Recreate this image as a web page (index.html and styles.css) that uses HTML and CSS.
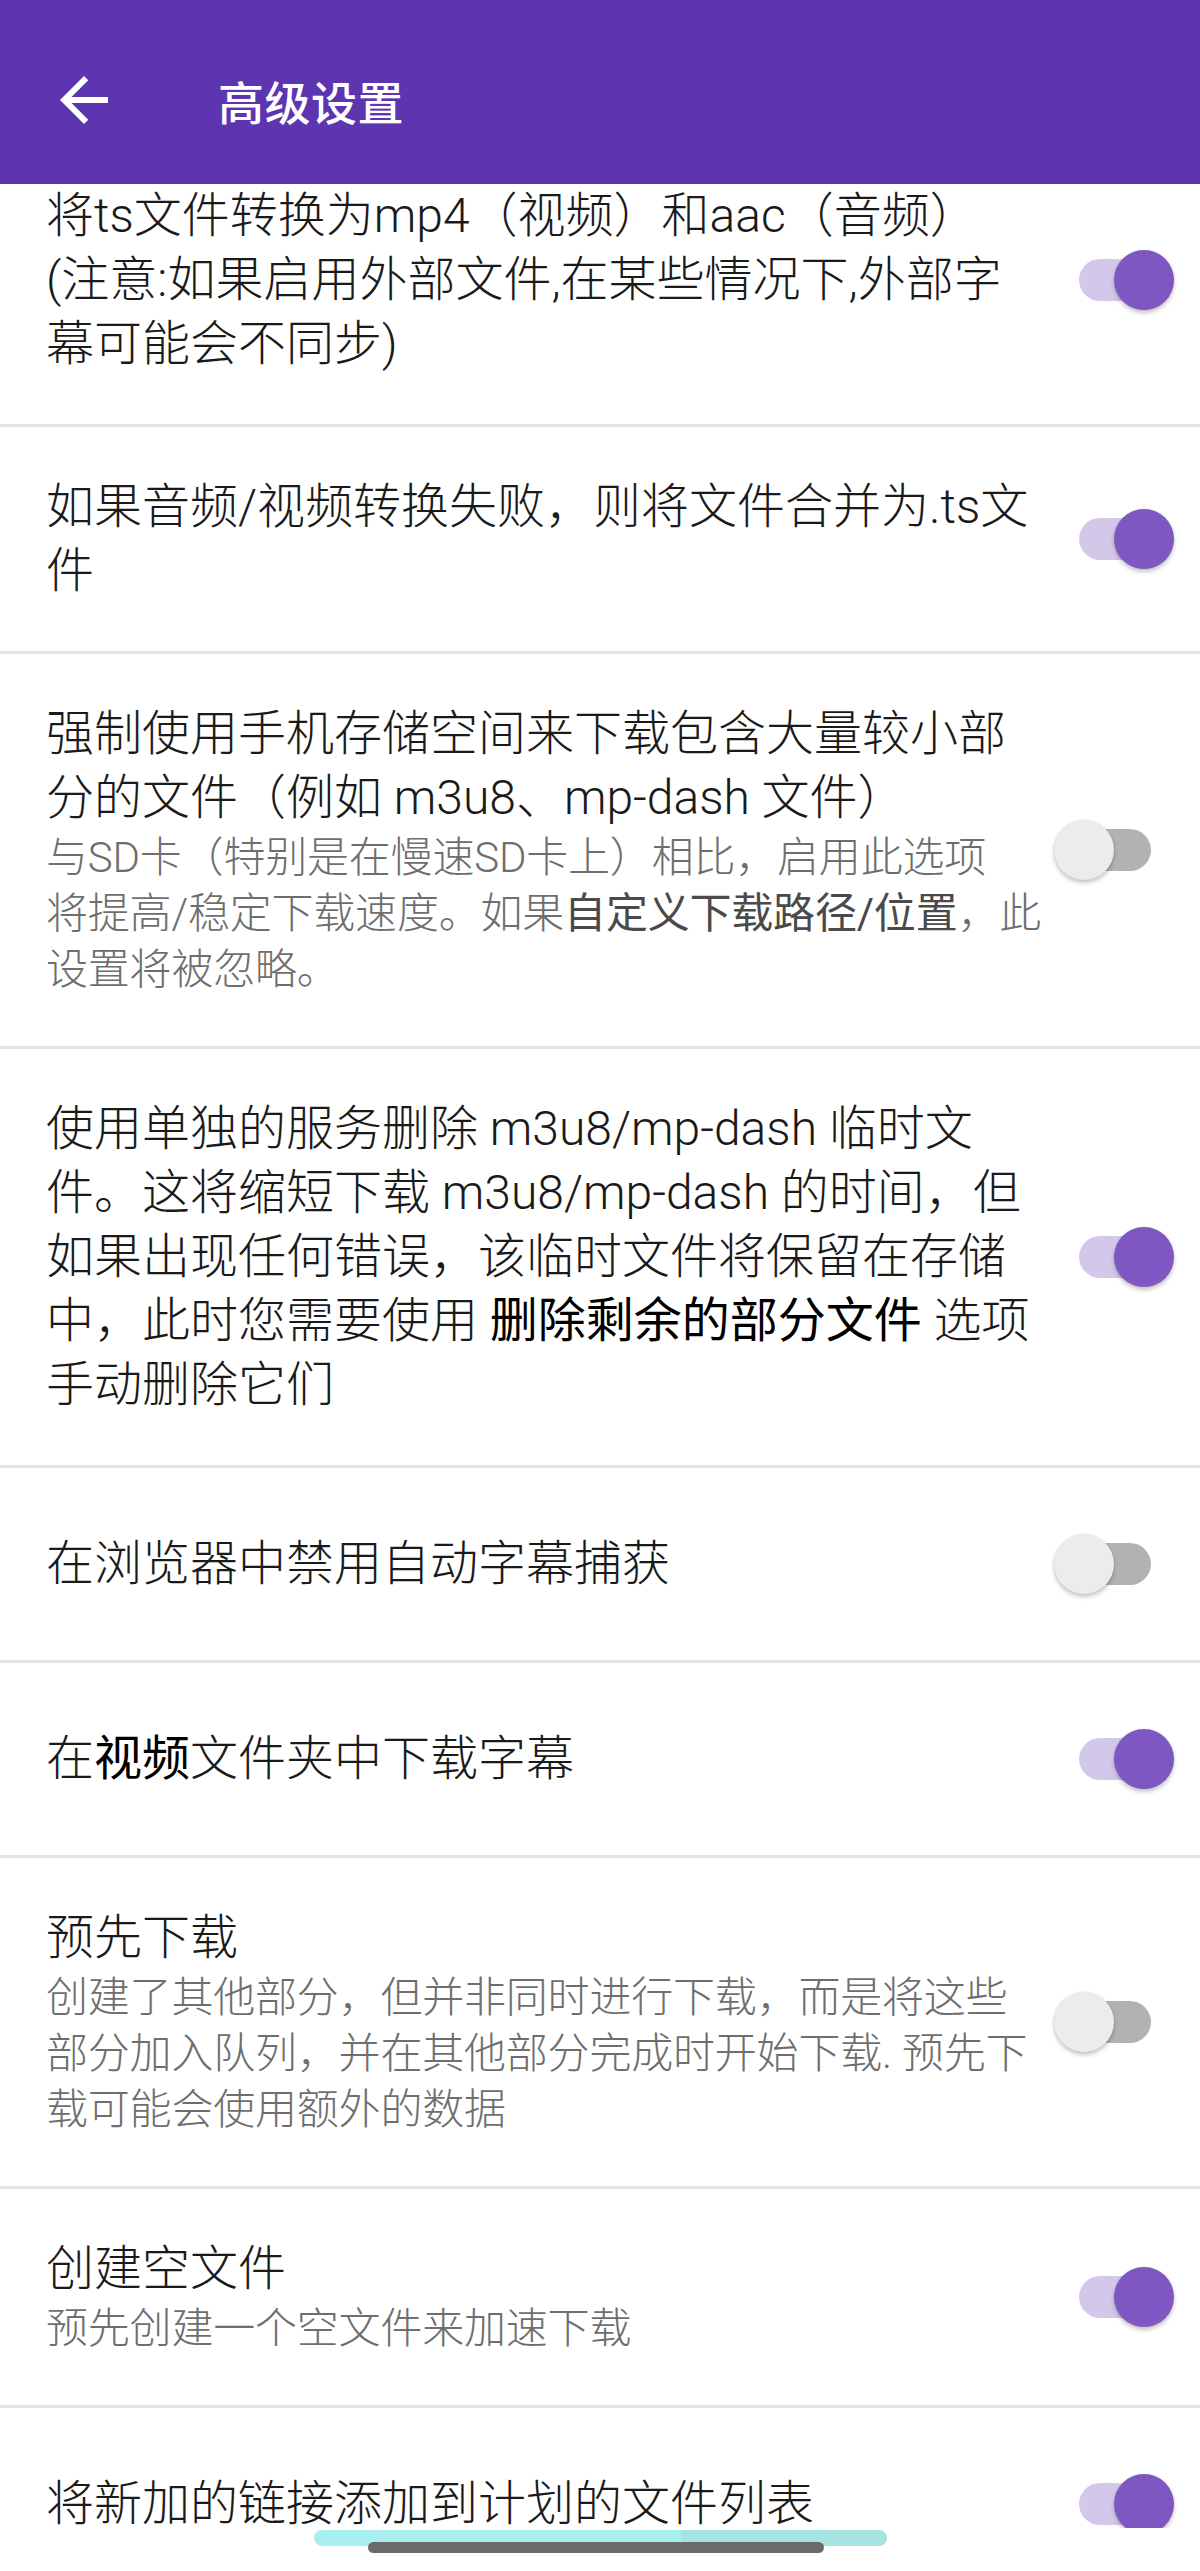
FILE: index.html
```html
<!DOCTYPE html>
<html lang="zh-CN">
    <head>
        <meta charset="UTF-8">
        <meta name="viewport" content="width=device-width,initial-scale=1">
        <title>高级设置</title>
        <link rel="stylesheet" href="styles.css">
    </head>
    <body>
        <div class="screen">
            <header class="appbar">
                <svg class="back" viewBox="0 0 24 24" width="72" height="72">
                    <path d="M20 11H7.83l5.59-5.59L12 4l-8 8 8 8 1.41-1.41L7.83 13H20v-2z" fill="#fff"/>
                </svg>
                <h1 class="appbar-title">高级设置</h1>
            </header>
            <main class="list">
                <div class="pref pref-first">
                    <div class="pref-text">
                        <p class="pref-title">将ts文件转换为mp4（视频）和aac（音频）<br>(注意:如果启用外部文件,在某些情况下,外部字<br>幕可能会不同步)</p>
                    </div>
                    <span class="switch on"><span class="thumb"></span></span>
                </div>
                <div class="pref">
                    <div class="pref-text">
                        <p class="pref-title">如果音频/视频转换失败，则将文件合并为.ts文<br>件</p>
                    </div>
                    <span class="switch on"><span class="thumb"></span></span>
                </div>
                <div class="pref">
                    <div class="pref-text">
                        <p class="pref-title">强制使用手机存储空间来下载包含大量较小部<br>分的文件（例如 m3u8、mp-dash 文件）</p>
                        <p class="pref-summary">与SD卡（特别是在慢速SD卡上）相比，启用此选项<br>将提高/稳定下载速度。如果<span class="em">自定义下载路径/位置</span>，此<br>设置将被忽略。</p>
                    </div>
                    <span class="switch"><span class="thumb"></span></span>
                </div>
                <div class="pref">
                    <div class="pref-text">
                        <p class="pref-title">使用单独的服务删除 m3u8/mp-dash 临时文<br>件。这将缩短下载 m3u8/mp-dash 的时间，但<br>如果出现任何错误，该临时文件将保留在存储<br>中，此时您需要使用 <b>删除剩余的部分文件</b> 选项<br>手动删除它们</p>
                    </div>
                    <span class="switch on"><span class="thumb"></span></span>
                </div>
                <div class="pref">
                    <div class="pref-text">
                        <p class="pref-title">在浏览器中禁用自动字幕捕获</p>
                    </div>
                    <span class="switch"><span class="thumb"></span></span>
                </div>
                <div class="pref">
                    <div class="pref-text">
                        <p class="pref-title">在<span class="em">视频</span>文件夹中下载字幕</p>
                    </div>
                    <span class="switch on"><span class="thumb"></span></span>
                </div>
                <div class="pref">
                    <div class="pref-text">
                        <p class="pref-title">预先下载</p>
                        <p class="pref-summary">创建了其他部分，但并非同时进行下载，而是将这些<br>部分加入队列，并在其他部分完成时开始下载. 预先下<br>载可能会使用额外的数据</p>
                    </div>
                    <span class="switch"><span class="thumb"></span></span>
                </div>
                <div class="pref">
                    <div class="pref-text">
                        <p class="pref-title">创建空文件</p>
                        <p class="pref-summary">预先创建一个空文件来加速下载</p>
                    </div>
                    <span class="switch on"><span class="thumb"></span></span>
                </div>
                <div class="pref">
                    <div class="pref-text">
                        <p class="pref-title">将新加的链接添加到计划的文件列表</p>
                    </div>
                    <span class="switch on"><span class="thumb"></span></span>
                </div>
            </main>
            <div class="navbar">
                <span class="nav-glow"></span>
                <span class="nav-pill"></span>
            </div>
        </div>
    </body>
</html>
```

FILE: styles.css
```css
*, *::before, *::after {
    box-sizing: border-box;
}
html, body {
    margin: 0;
    padding: 0;
    background-color: #fff;
    font-family: Roboto, "Noto Sans CJK SC", sans-serif;
}
.screen {
    display: flex;
    flex-direction: column;
    height: 100vh;
}
.appbar {
    flex: none;
    display: flex;
    align-items: center;
    height: 184px;
    padding: 16px 0 0 48px;
    background-color: #5e35b1;
    position: relative;
    z-index: 1;
}
.back {
    flex: none;
    display: block;
}
.appbar-title {
    margin: 0 0 0 98px;
    font-size: 46px;
    font-weight: 500;
    color: #fff;
    letter-spacing: 0.5px;
}
.list {
    flex: 1;
    overflow: hidden;
}
.pref {
    display: flex;
    align-items: center;
    min-height: 195px;
    padding: 48px 26px 48px 46px;
    border-bottom: 3px solid #e3e3e3;
}
.pref-first {
    padding-top: 0;
}
.pref-text {
    flex: 1;
    min-width: 0;
    white-space: nowrap;
    font-weight: 300;
}
.pref-title, .pref-summary {
    margin: 0;
}
.pref-title {
    font-size: 48px;
    line-height: 64px;
    color: #1a1a1a;
}
.pref-title b, .pref-title .em {
    font-weight: 400;
    color: #000;
}
.pref-summary {
    font-size: 42px;
    line-height: 56px;
    color: #6e6e6e;
    letter-spacing: -0.2px;
}
.pref-summary .em {
    font-weight: 400;
    color: #4a4a4a;
}
.switch {
    flex: none;
    position: relative;
    width: 120px;
    height: 60px;
    margin-left: 8px;
}
.switch::before {
    content: "";
    position: absolute;
    left: 25px;
    top: 9px;
    width: 72px;
    height: 42px;
    border-radius: 21px;
    background-color: #b2b2b2;
}
.thumb {
    position: absolute;
    top: 0;
    left: 0;
    width: 60px;
    height: 60px;
    border-radius: 50%;
    background-color: #ececec;
    box-shadow: 0 3px 4px rgba(0, 0, 0, 0.22), 0 0 2px rgba(0, 0, 0, 0.1);
}
.switch.on::before {
    background-color: #d3c8ea;
}
.switch.on .thumb {
    left: 60px;
    background-color: #7e57c2;
}
.navbar {
    flex: none;
    display: grid;
    height: 43px;
    background-color: #fff;
}
.nav-glow, .nav-pill {
    grid-area: 1 / 1;
    justify-self: center;
    align-self: start;
}
.nav-glow {
    width: 573px;
    height: 16px;
    margin-top: 2px;
    border-radius: 8px;
    background: linear-gradient(to right, #a8eeee 0, #a8eeee 64%, #a7e3e3 64%, #a7e3e3 100%);
}
.nav-pill {
    width: 456px;
    height: 11px;
    margin-top: 14px;
    margin-right: 8px;
    border-radius: 6px;
    background-color: #686a6b;
}
```
